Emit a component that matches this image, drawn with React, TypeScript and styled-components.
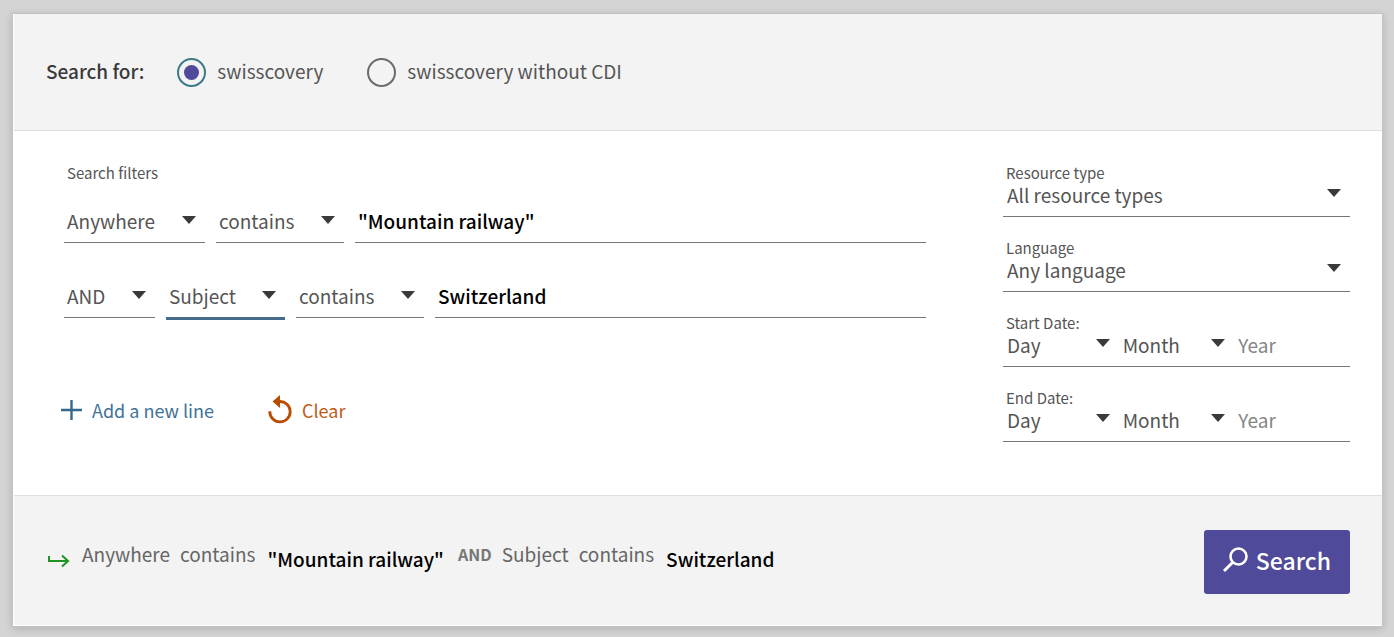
import React from "react";
import styled, { createGlobalStyle } from "styled-components";

const GlobalStyle = createGlobalStyle`
  *, *::before, *::after { box-sizing: border-box; }
  body {
    margin: 0;
    background: #d4d4d4;
    color: #555;
    font-family: "Noto Sans CJK SC", "Noto Sans", sans-serif;
    font-size: 19px;
    line-height: 28px;
  }
  button, input, select { font: inherit; color: inherit; }
`;

const Page = styled.div`
  padding: 13px 11px 10px 12px;
`;

const Card = styled.form`
  background: #fff;
  border: 1px solid #c2c2c2;
  padding: 0 0 1px 1px;
  box-shadow: 0 2px 8px rgba(0, 0, 0, 0.16);
`;

const ScopeBar = styled.fieldset`
  display: flex;
  align-items: flex-start;
  margin: 0;
  border: 0;
  border-bottom: 1px solid #e0e0e0;
  padding: 44px 32px 43px;
  background: #f3f3f3;
  line-height: 25px;
`;

const ScopeTitle = styled.span`
  margin-right: 33px;
  color: #3a3a3a;
  font-weight: 500;
`;

const ScopeOption = styled.label`
  display: flex;
  align-items: flex-start;
  gap: 11px;
  margin-right: 44px;
  height: 29px;
`;

const Radio = styled.input`
  appearance: none;
  width: 29px;
  height: 29px;
  margin: 0;
  padding: 5px;
  border: 2px solid #6b6b6b;
  border-radius: 50%;
  &:checked {
    border-color: #3b7a87;
    background: #4f4a99 content-box;
  }
`;

const Body = styled.div`
  display: grid;
  grid-template-columns: minmax(0, 1fr) 347px;
  column-gap: 77px;
  padding: 32px 32px 53px 50px;
`;

const SmallLabel = styled.label`
  display: block;
  padding-left: 3px;
  font-size: 15px;
  line-height: 20px;
  color: #555;
`;

const Lines = styled.div`
  display: grid;
  gap: 35px;
  margin: 21px 0 75px;
`;

const Line = styled.div`
  display: flex;
  align-items: flex-start;
  gap: 11px;
  height: 40px;
`;

const SelectBox = styled.div<{ $width: number; $active?: boolean }>`
  display: grid;
  align-items: center;
  width: ${(p) => p.$width}px;
  border-bottom: ${(p) => (p.$active ? "3px solid #466a8c" : "1px solid #777")};
`;

const PlainSelectBox = styled.div`
  display: grid;
  align-items: center;
`;

const Select = styled.select`
  grid-area: 1 / 1;
  appearance: none;
  width: 100%;
  height: 28px;
  margin: 0;
  border: 0;
  border-radius: 0;
  padding: 0 28px 0 4px;
  background: transparent;
  outline: 0;
`;

const LineSelectControl = styled(Select)`
  height: 38px;
  padding: 0 28px 4px 3px;
`;

const Caret = styled.span<{ $lift: number }>`
  grid-area: 1 / 1;
  justify-self: end;
  margin: 0 9px ${(p) => p.$lift}px 0;
  border: 7px solid transparent;
  border-top: 8px solid #3a3a3a;
  border-bottom: 0;
  pointer-events: none;
`;

const TermInput = styled.input`
  flex: 1;
  min-width: 0;
  height: 39px;
  border: 0;
  border-bottom: 1px solid #777;
  padding: 0 3px 6px;
  background: transparent;
  color: #000;
  font-weight: 500;
  outline: 0;
`;

const Actions = styled.div`
  display: flex;
  gap: 54px;
  margin-left: -3px;
`;

const TextButton = styled.button<{ $color: string }>`
  display: flex;
  align-items: center;
  gap: 10px;
  height: 32px;
  border: 0;
  padding: 0;
  background: none;
  color: ${(p) => p.$color};
  font-size: 18px;
  cursor: pointer;
`;

const Facets = styled.div`
  display: grid;
  align-content: start;
  gap: 21px;
`;

const Facet = styled.div`
  border-bottom: 1px solid #777;
  padding-bottom: 7px;
`;

const FacetValue = styled.div`
  display: grid;
  grid-auto-flow: column;
  grid-auto-columns: minmax(0, 1fr);
  margin-top: -2px;
`;

const YearInput = styled.input`
  min-width: 0;
  height: 28px;
  border: 0;
  padding: 0 4px;
  background: transparent;
  outline: 0;
  &::placeholder { color: #858585; opacity: 1; }
`;

const Footer = styled.footer`
  display: flex;
  align-items: center;
  justify-content: space-between;
  border-top: 1px solid #e0e0e0;
  padding: 34px 32px 31px 34px;
  background: #f3f3f3;
`;

const Summary = styled.div`
  display: flex;
  align-items: flex-start;
  gap: 10px;
  padding-bottom: 12px;
  color: #666;
`;

const ArrowIcon = styled.svg`
  margin: 14px 2px 0 0;
`;

const Term = styled.span`
  margin: 5px 4px 0 2px;
  color: #000;
  font-weight: 500;
`;

const Operator = styled.span`
  font-size: 16px;
  font-weight: 700;
  color: #777;
`;

const SearchButton = styled.button`
  display: flex;
  align-items: center;
  gap: 8px;
  height: 64px;
  border: 0;
  border-radius: 3px;
  padding: 0 19px 4px 18px;
  background: #4f4a99;
  color: #fff;
  font-size: 23px;
  font-weight: 500;
  cursor: pointer;
`;

type LineSelectProps = { label: string; value: string; width: number; active?: boolean };

const LineSelect = ({ label, value, width, active }: LineSelectProps) => (
  <SelectBox $width={width} $active={active}>
    <LineSelectControl aria-label={label} defaultValue={value}>
      <option>{value}</option>
    </LineSelectControl>
    <Caret $lift={7} />
  </SelectBox>
);

const FacetSelect = ({ id, label, value }: { id?: string; label?: string; value: string }) => (
  <PlainSelectBox>
    <Select id={id} aria-label={label} defaultValue={value}>
      <option>{value}</option>
    </Select>
    <Caret $lift={5} />
  </PlainSelectBox>
);

const DropFacet = ({ id, label, value }: { id: string; label: string; value: string }) => (
  <Facet>
    <SmallLabel htmlFor={id}>{label}</SmallLabel>
    <FacetValue>
      <FacetSelect id={id} value={value} />
    </FacetValue>
  </Facet>
);

const DateFacet = ({ id, label }: { id: string; label: string }) => (
  <Facet>
    <SmallLabel htmlFor={id}>{label}</SmallLabel>
    <FacetValue>
      <FacetSelect id={id} value="Day" />
      <FacetSelect label="Month" value="Month" />
      <YearInput aria-label="Year" placeholder="Year" />
    </FacetValue>
  </Facet>
);

export default function App() {
  return (
    <>
      <GlobalStyle />
      <Page>
        <Card onSubmit={(e) => e.preventDefault()}>
          <ScopeBar>
            <ScopeTitle>Search for:</ScopeTitle>
            <ScopeOption>
              <Radio type="radio" name="scope" defaultChecked />
              swisscovery
            </ScopeOption>
            <ScopeOption>
              <Radio type="radio" name="scope" />
              swisscovery without CDI
            </ScopeOption>
          </ScopeBar>
          <Body>
            <div>
              <SmallLabel htmlFor="term-1">Search filters</SmallLabel>
              <Lines>
                <Line>
                  <LineSelect label="Field" value="Anywhere" width={141} />
                  <LineSelect label="Match" value="contains" width={128} />
                  <TermInput id="term-1" defaultValue={'"Mountain railway"'} />
                </Line>
                <Line>
                  <LineSelect label="Operator" value="AND" width={91} />
                  <LineSelect label="Field" value="Subject" width={119} active />
                  <LineSelect label="Match" value="contains" width={128} />
                  <TermInput aria-label="Second term" defaultValue="Switzerland" />
                </Line>
              </Lines>
              <Actions>
                <TextButton type="button" $color="#3f7299">
                  <svg width="21" height="20" viewBox="0 0 21 20" stroke="#35688f" strokeWidth="2.4">
                    <path d="M10.500 0v20M0 10h21" />
                  </svg>
                  Add a new line
                </TextButton>
                <TextButton type="button" $color="#c05a17">
                  <svg width="24" height="30" viewBox="0 0 24 30" fill="none">
                    <path d="M1.800 16.300A10.200 10.200 0 1 0 11.500 6.500" stroke="#b84c00" strokeWidth="2.800" />
                    <path d="M4.500 6.500L12 0v13z" fill="#b84c00" />
                  </svg>
                  Clear
                </TextButton>
              </Actions>
            </div>
            <Facets>
              <DropFacet id="resource" label="Resource type" value="All resource types" />
              <DropFacet id="language" label="Language" value="Any language" />
              <DateFacet id="start-day" label="Start Date:" />
              <DateFacet id="end-day" label="End Date:" />
            </Facets>
          </Body>
          <Footer>
            <Summary>
              <ArrowIcon width="22" height="14" viewBox="0 0 22 14" fill="none" stroke="#1f9324" strokeWidth="2">
                <path d="M1 2v5h19M14 1.500L20 7l-6 5.500" />
              </ArrowIcon>
              <span>Anywhere</span>
              <span>contains</span>
              <Term>"Mountain railway"</Term>
              <Operator>AND</Operator>
              <span>Subject</span>
              <span>contains</span>
              <Term>Switzerland</Term>
            </Summary>
            <SearchButton type="submit">
              <svg width="26" height="26" viewBox="0 0 26 26" fill="none" stroke="#fff" strokeWidth="2.600">
                <circle cx="16.500" cy="9.500" r="8" />
                <path d="M10.800 15.200L2 24" strokeWidth="3" />
              </svg>
              Search
            </SearchButton>
          </Footer>
        </Card>
      </Page>
    </>
  );
}
